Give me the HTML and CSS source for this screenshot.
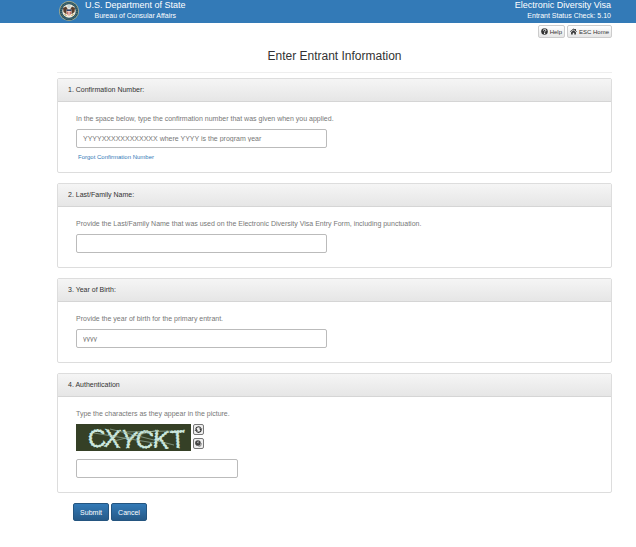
FILE: index.html
```html
<!DOCTYPE html>
<html lang="en">
<head>
  <meta charset="utf-8">
  <title>Enter Entrant Information</title>
  <link rel="stylesheet" href="styles.css">
</head>
<body>
  <header class="topbar">
    <div class="agency">
      <svg class="seal" viewBox="0 0 40 40" aria-hidden="true">
        <circle cx="20" cy="20" r="20" fill="#b5b48c"/>
        <circle cx="20" cy="20" r="18.5" fill="#244f60"/>
        <circle cx="20" cy="20" r="16" fill="none" stroke="#6f8a80" stroke-width="2" stroke-dasharray="2 2"/>
        <circle cx="20" cy="20" r="13.5" fill="#f1eee0"/>
        <circle cx="20" cy="11" r="3.5" fill="#c7d5d6"/>
        <path d="M18 17l-4-6-6 3 1 8 5 4 4-2 2 6 2-6 4 2 5-4 1-8-6-3-4 6z" fill="#5a3e2c"/>
        <path d="M15 17h10v7q-1 4-5 6-4-2-5-6z" fill="#f5eee4"/>
        <path d="M15 17h10v3H15z" fill="#28416d"/>
        <path d="M17 21v6M20 21v8M23 21v6" stroke="#b54340" stroke-width="1.5"/>
        <path d="M11 26l4 4M29 26l-4 4" stroke="#b28c3a" stroke-width="2"/>
      </svg>
      <div>
        <div class="brand">U.S. Department of State</div>
        <div class="sub">Bureau of Consular Affairs</div>
      </div>
    </div>
    <div class="program">
      <div class="brand">Electronic Diversity Visa</div>
      <div class="sub">Entrant Status Check: 5.10</div>
    </div>
  </header>

  <main class="container">
    <nav class="tools">
      <button type="button" class="btn-small">
        <svg class="icon" viewBox="0 0 16 16" aria-hidden="true">
          <circle cx="8" cy="8" r="7.5" fill="#333"/>
          <path d="M5.5 6q0-3 2.7-3T11 5.5Q11 7 8.2 8.5V10" fill="none" stroke="#fff" stroke-width="2"/>
          <path d="M7 11h2.5v2.5H7z" fill="#fff"/>
        </svg>
        Help
      </button>
      <button type="button" class="btn-small">
        <svg class="icon" viewBox="0 0 16 16" aria-hidden="true">
          <path d="M8 1l3 2.5V2h2.500v4L16 8.200l-1 1.200-7-6-7 6-1-1.200z" fill="#333"/>
          <path d="M8 5l5.500 4.700V15H9.800v-4H6.200v4H2.500V9.700z" fill="#333"/>
        </svg>
        ESC Home
      </button>
    </nav>

    <h1>Enter Entrant Information</h1>

    <form id="entrant-form">
      <section class="panel">
        <h2>1. Confirmation Number:</h2>
        <div class="panel-body">
          <label for="confirmation">In the space below, type the confirmation number that was given when you applied.</label>
          <input type="text" id="confirmation" name="confirmation" placeholder="YYYYXXXXXXXXXXXX where YYYY is the program year">
          <a class="forgot" href="#">Forgot Confirmation Number</a>
        </div>
      </section>

      <section class="panel">
        <h2>2. Last/Family Name:</h2>
        <div class="panel-body">
          <label for="lastname">Provide the Last/Family Name that was used on the Electronic Diversity Visa Entry Form, including punctuation.</label>
          <input type="text" id="lastname" name="lastname">
        </div>
      </section>

      <section class="panel">
        <h2>3. Year of Birth:</h2>
        <div class="panel-body">
          <label for="birthyear">Provide the year of birth for the primary entrant.</label>
          <input type="text" id="birthyear" name="birthyear" placeholder="yyyy">
        </div>
      </section>

      <section class="panel">
        <h2>4. Authentication</h2>
        <div class="panel-body">
          <label for="authcode">Type the characters as they appear in the picture.</label>
          <div class="captcha">
            <svg class="captcha-image" viewBox="0 0 115 27" role="img" aria-label="Authentication characters">
              <rect width="115" height="27" fill="#354026"/>
              <g class="captcha-text">
                <text x="12" y="23" transform="rotate(-5 20 14)">C</text>
                <text x="28" y="23" transform="rotate(4 36 14)">X</text>
                <text x="45" y="24" transform="rotate(9 53 14)">Y</text>
                <text x="60" y="24" transform="rotate(7 69 14)">C</text>
                <text x="77" y="24" transform="rotate(5 85 14)">K</text>
                <text x="94" y="24" transform="rotate(-3 101 14)">T</text>
              </g>
              <path d="M18 9l60 10M34 5l64 16M38 17l44-11M48 8l48-1" fill="none" stroke="#a9c4b4" stroke-width=".6"/>
            </svg>
            <div class="captcha-tools">
              <button type="button" class="btn-icon" aria-label="New picture">
                <svg viewBox="0 0 16 16" aria-hidden="true">
                  <path d="M3 7q1-4 5-4 3 0 4 3M13 9q-1 4-5 4-3 0-4-3" fill="none" stroke="#333" stroke-width="2"/>
                  <path d="M9 6h6l-3 4zM1 10h6L4 6z" fill="#333"/>
                </svg>
              </button>
              <button type="button" class="btn-icon" aria-label="Play audio">
                <svg viewBox="0 0 16 16" aria-hidden="true">
                  <circle cx="7" cy="7" r="5" fill="#444"/>
                  <path d="M5 6l3-3v5z" fill="#bbb"/>
                  <path d="M8 13q5 0 5-6" fill="none" stroke="#999" stroke-width="2"/>
                </svg>
              </button>
            </div>
          </div>
          <input type="text" class="short" id="authcode" name="authcode">
        </div>
      </section>

      <div class="actions">
        <button type="submit" class="btn-primary">Submit</button>
        <button type="button" class="btn-primary">Cancel</button>
      </div>
    </form>
  </main>
</body>
</html>
```

FILE: styles.css
```css
* {
  box-sizing: border-box;
}
body {
  margin: 0;
  background: #fff;
  color: #333;
  font-family: "Liberation Sans", Arial, sans-serif;
  font-size: 7px;
}
.topbar {
  display: flex;
  justify-content: space-between;
  height: 23px;
  padding: 0 25px 0 59px;
  background: #337ab7;
  color: #fff;
}
.agency {
  display: flex;
  gap: 6px;
  text-align: center;
}
.seal {
  width: 20px;
  height: 20px;
  margin-top: 1px;
}
.program {
  text-align: right;
}
.brand {
  font-size: 9px;
  line-height: 11px;
}
.sub {
  font-size: 7px;
  line-height: 9px;
}
.container {
  padding: 2px 24px 24px 57px;
}
.tools {
  display: flex;
  justify-content: flex-end;
  gap: 2px;
}
button {
  font-family: inherit;
  font-size: 7px;
  cursor: pointer;
}
.btn-small {
  display: flex;
  align-items: center;
  gap: 2px;
  height: 13px;
  padding: 0 2px;
  border: 1px solid #ccc;
  border-radius: 2px;
  background: linear-gradient(#fff, #e6e6e6);
  color: #333;
  font-size: 6px;
}
.icon {
  width: 7px;
  height: 7px;
}
h1 {
  margin: 0 0 5px;
  padding: 10px 0 8px;
  border-bottom: 1px solid #eee;
  font-size: 12px;
  font-weight: normal;
  line-height: 16px;
  text-align: center;
}
.panel {
  margin-bottom: 10px;
  border: 1px solid #ddd;
  border-radius: 2px;
}
h2 {
  margin: 0;
  padding: 0 10px;
  border-bottom: 1px solid #d5d5d5;
  background: linear-gradient(#f5f5f5, #e6e6e6);
  font-size: 7px;
  font-weight: normal;
  line-height: 22px;
}
.panel-body {
  padding: 12px 18px 10px;
}
label {
  display: block;
  margin-bottom: 5px;
  color: #777;
  line-height: 10px;
}
input {
  display: block;
  width: 251px;
  max-width: 100%;
  height: 19px;
  margin-bottom: 4px;
  padding: 0 6px;
  border: 1px solid #bbb;
  border-radius: 2px;
  color: #555;
  font-family: inherit;
  font-size: 7px;
}
input::placeholder {
  color: #777;
  opacity: 1;
}
.short {
  width: 162px;
}
.forgot {
  display: block;
  padding-left: 2px;
  color: #337ab7;
  font-size: 6px;
  line-height: 10px;
  text-decoration: none;
}
.captcha {
  display: flex;
  gap: 2px;
  margin-bottom: 8px;
}
.captcha-image {
  width: 115px;
  height: 27px;
  overflow: visible;
}
.captcha-text {
  fill: #c9e6dc;
  stroke: #d9f3ea;
  stroke-width: 1px;
  stroke-dasharray: 1 2;
  font-size: 25px;
}
.captcha-tools {
  display: flex;
  flex-direction: column;
  gap: 3px;
}
.btn-icon {
  display: flex;
  width: 11px;
  height: 11px;
  padding: 0;
  border: 1px solid #777;
  border-radius: 2px;
  background: #eee;
}
.btn-icon svg {
  width: 9px;
  height: 9px;
}
.actions {
  display: flex;
  gap: 2px;
  padding-left: 16px;
}
.btn-primary {
  width: 36px;
  height: 18px;
  padding: 0;
  border: 1px solid #245580;
  border-radius: 2px;
  background: linear-gradient(#337ab7, #265a88);
  color: #fff;
}
```
